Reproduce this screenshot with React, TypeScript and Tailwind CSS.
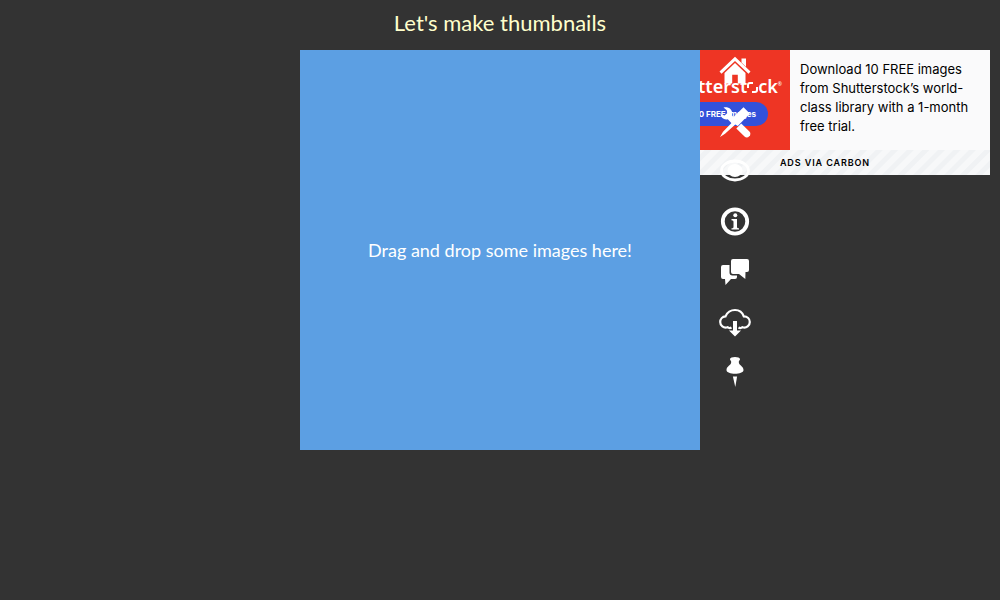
import type { ReactNode } from "react";

const tools: { label: string; art: ReactNode }[] = [
  {
    label: "Home",
    art: (
      <path
        fillRule="evenodd"
        d="M16 .8 31.500 15.500l-2 2.200L16 5 2.500 17.700l-2-2.200zM22.500 2.500H27v8.200l-4.500-4.200zM16 7 26.500 17v10.500h-7.700v-8.800h-5.600v8.800H5.500V17z"
      />
    ),
  },
  {
    label: "Tools",
    art: (
      <>
        <path d="M4.500 1.600c4-1.400 8.200 1 8.700 5 .1 1-.1 1.900-.4 2.700L17 13.500 13 17.700l-4.200-4.500C5.500 14.300 2 12 1.500 8l4 1.500 2.700-2.200-.4-3z" />
        <path d="m24.500 1.200 6.300 6.300-12 12.500-2.500-1.500L6 27.800 1 31l3-5.300L13.500 16l-1.500-2.500z" />
        <path d="m17.300 22.500 4.900-5 8.200 8c3 3-1.700 8-4.900 5z" />
      </>
    ),
  },
  {
    label: "Preview",
    art: (
      <>
        <ellipse cx="16" cy="14.500" rx="13.500" ry="9.500" fill="none" stroke="currentColor" strokeWidth="2.800" />
        <ellipse cx="16" cy="14.500" rx="7.500" ry="6.500" />
      </>
    ),
  },
  {
    label: "Information",
    art: (
      <>
        <circle cx="16" cy="15.500" r="12.200" fill="none" stroke="currentColor" strokeWidth="3.800" />
        <circle cx="16.300" cy="9.300" r="2" />
        <path d="M12.500 13H18v7.700c0 1.300.5 1.500 2 1.500v1.300h-7.500v-1.200c1.500 0 2-.3 2-1.600v-4.700c0-1.300-.5-1.600-2-1.700z" />
      </>
    ),
  },
  {
    label: "Feedback",
    art: (
      <>
        <path d="M14 3h14q2 0 2 2v9q0 2-2 2h-1.500l-.2 7-6.300-5h-6q-2 0-2-2V5q0-2 2-2z" />
        <path d="M4 9h6.500v7.500q0 3 3 3H18V21q0 2-2 2h-4l-5.500 6-.5-6H4q-2 0-2-2V11q0-2 2-2z" />
      </>
    ),
  },
  {
    label: "Download",
    art: (
      <>
        <path
          d="M12.500 21.500c-1.500 1-3 .5-4-.3C4.500 22.500 1.200 19.500 1.200 16c0-3 2.200-5.400 5.300-5.600C8 6.500 12 4 16 4s7.500 2.500 8.800 6.400c3.500 0 6 2.500 6 5.600 0 3.500-3.300 6.500-7.300 5.200-1 .8-2.500 1.300-4 .3"
          fill="none"
          stroke="currentColor"
          strokeWidth="2.200"
        />
        <path d="M14 15h4v9.500h4l-6 6-6-6h4z" />
      </>
    ),
  },
  {
    label: "Pin",
    art: (
      <>
        <path d="M11 3C11 .2 21 .2 21 3c0 1.500-1.200 1.500-1.200 3 0 3.500 4.700 4 4.700 8 0 5-17 5-17 0 0-4 4.700-4.500 4.700-8 0-1.500-1.200-1.500-1.200-3z" />
        <path d="M13.900 20.500h4.200L16.300 31z" />
      </>
    ),
  },
];

function Advert() {
  return (
    <aside className="absolute top-0 right-2.5 w-[330px] bg-[#fafafb] font-[Inter,sans-serif] text-black">
      <a href="#shutterstock" className="flex">
        <span className="flex h-[100px] w-[130px] shrink-0 flex-col items-end bg-[#ee3524] pt-6 text-white">
          <span className="mr-2 flex items-baseline font-['Noto_Sans',sans-serif] text-lg leading-6 font-semibold">
            <span>shutterst</span>
            <svg viewBox="0 0 11 11" className="size-[11px]" fill="none" stroke="currentColor" strokeWidth="2" aria-label="o">
              <path d="M1 6V3q0-2 2-2h3M10 5v3q0 2-2 2H5" />
            </svg>
            <span>ck</span>
            <span className="mt-1 self-start text-[5px] leading-3">®</span>
          </span>
          <span className="mt-1 mr-5.5 rounded-full bg-[#3351da] px-3 text-[8px] leading-6 font-bold">
            10 FREE images
          </span>
        </span>
        <span className="p-2.5 text-[13px] leading-[19px]">
          Download 10 FREE images from Shutterstock’s world-class library with a 1-month free trial.
        </span>
      </a>
      <a
        href="#carbon"
        className="block bg-[repeating-linear-gradient(-45deg,#f7f8f9_0px,#f7f8f9_5px,#f0f2f4_6px,#f0f2f4_10px,#f7f8f9_11px)] text-center text-[9px] leading-[25px] font-semibold tracking-widest"
      >
        ADS VIA CARBON
      </a>
    </aside>
  );
}

export default function App() {
  return (
    <div className="min-h-screen bg-[#333333] font-[Lato,sans-serif]">
      <h1 className="h-[50px] text-center text-[22px] leading-[46px] text-[#ffffcc]">Let's make thumbnails</h1>
      <main className="relative flex justify-center">
        <Advert />
        <section className="relative w-[400px]">
          <button className="flex aspect-square w-full items-center justify-center bg-[#5c9fe3] text-lg text-white">
            Drag and drop some images here!
          </button>
          <nav className="absolute top-0 left-full flex w-[70px] flex-col items-center gap-[18px] pt-1.5 text-white">
            {tools.map(({ label, art }) => (
              <a key={label} href={"#" + label.toLowerCase()} aria-label={label}>
                <svg viewBox="0 0 32 32" className="size-8" fill="currentColor" aria-hidden="true">
                  {art}
                </svg>
              </a>
            ))}
          </nav>
        </section>
      </main>
    </div>
  );
}
